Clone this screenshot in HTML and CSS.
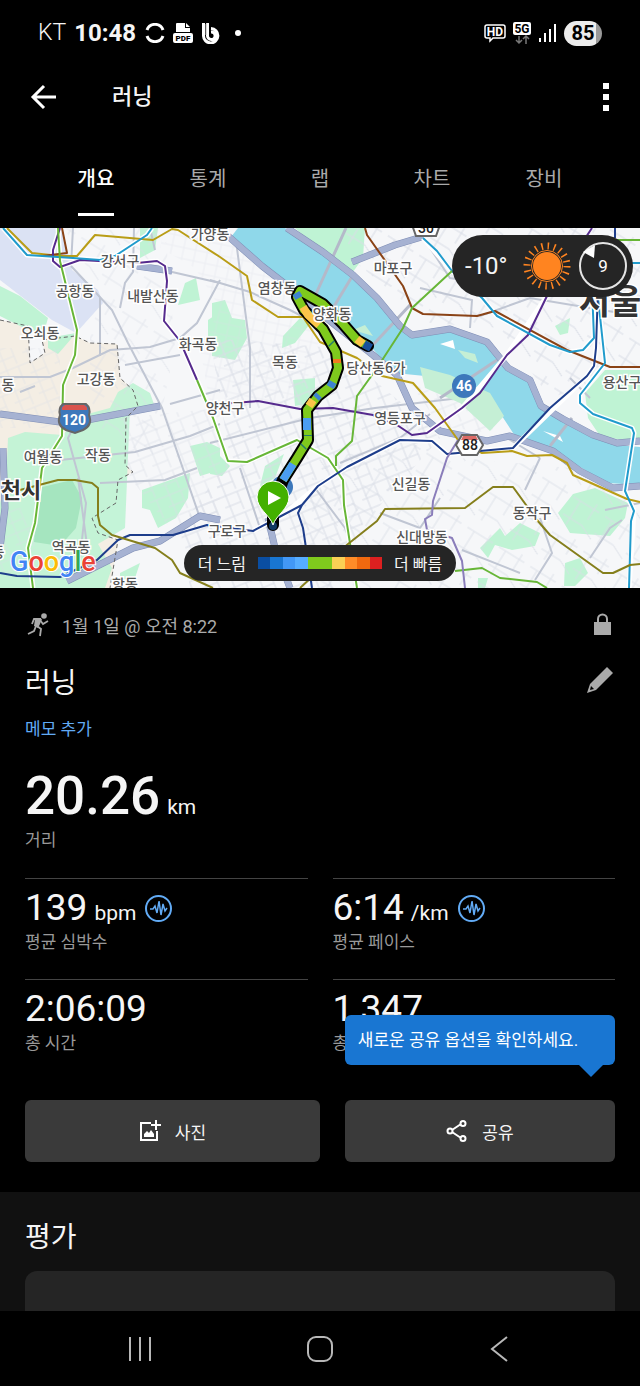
FILE: index.html
```html
<!DOCTYPE html>
<html lang="ko">
<head>
    <meta charset="UTF-8">
    <meta name="viewport" content="width=device-width, initial-scale=1.0">
    <title>러닝</title>
    <link rel="stylesheet" href="styles.css">
</head>
<body>
<div class="app">
    <div class="status">
        <span class="carrier">KT</span>
        <span class="clock">10:48</span>
        <svg class="st_sync" width="20" height="20" viewBox="0 0 20 20"><path d="M2 7A8.5 8.5 0 0 1 18 7M2 13A8.5 8.5 0 0 0 18 13" fill="none" stroke="#fff" stroke-width="3"/></svg>
        <svg class="st_pdf" width="20" height="20" viewBox="0 0 20 20">
            <path d="M4 0H12V5H17V9H3V1Q3 0 4 0ZM13 0L17 4H13Z" fill="#fff"/>
            <rect y="10" width="20" height="10" rx="2" fill="#fff"/>
            <text x="10" y="18" class="t_pdf">PDF</text>
        </svg>
        <svg class="st_b" width="18" height="21" viewBox="0 0 18 21"><path d="M1.5 0V12.5A7.2 7.2 0 1 0 9 5.500M5.500 0V12.500A3.800 3.800 0 1 0 9 9" fill="none" stroke="#fff" stroke-width="3"/><path d="M2 1V12H6V1Z" fill="#fff"/><path d="M3.700 0V12" stroke="#000" stroke-width="0.800"/></svg>
        <i class="st_dot"></i>
        <div class="status_right">
            <svg width="22" height="20" viewBox="0 0 22 20"><path d="M3 2H19Q21 2 21 4V13Q21 15 19 15H9L6 18V15H3Q1 15 1 13V4Q1 2 3 2Z" fill="none" stroke="#fff" stroke-width="1.500"/><text x="11" y="13" class="t_hd">HD</text></svg>
            <svg width="20" height="24" viewBox="0 0 20 24"><rect x="1" y="1" width="18" height="13" rx="2" fill="#fff"/><text x="10" y="12" class="t_5g">5G</text><path d="M7 15V22M4 19L7 22L10 19M14 23V16M11 18L14 15L17 18" fill="none" stroke="#777" stroke-width="1.500"/></svg>
            <svg width="18" height="20" viewBox="0 0 18 20"><path d="M2 15V19M7 10V19M12 6V19M17 1V19" stroke="#fff" stroke-width="2"/></svg>
            <span class="battery">85</span>
        </div>
    </div>

    <header class="appbar">
        <button class="icon_btn" aria-label="뒤로"><svg width="27" height="26" viewBox="0 0 27 26"><path d="M26 13H3M14 2L3 13L14 24" fill="none" stroke="#fff" stroke-width="3"/></svg></button>
        <h1>러닝</h1>
        <button class="icon_btn" aria-label="더보기"><svg width="6" height="30" viewBox="0 0 6 30"><path d="M0 1H6V7H0ZM0 12H6V18H0ZM0 23H6V29H0Z" fill="#fff"/></svg></button>
    </header>

    <nav class="tabs">
        <a href="#" class="on">개요</a>
        <a href="#">통계</a>
        <a href="#">랩</a>
        <a href="#">차트</a>
        <a href="#">장비</a>
    </nav>

    <div class="map">
        <svg class="map_svg" viewBox="0 0 640 360">
            <defs>
                <pattern id="st1" width="26" height="22" patternUnits="userSpaceOnUse" patternTransform="rotate(-22)"><path d="M0 3H26M0 14H17M5 0V22M17 3V22" class="street"/></pattern>
                <pattern id="st2" width="37" height="41" patternUnits="userSpaceOnUse" patternTransform="rotate(32)"><path d="M0 6H30M8 6V34M24 0V18M0 26H22M22 26L37 33" class="street"/></pattern>
                <pattern id="st3" width="12" height="11" patternUnits="userSpaceOnUse" patternTransform="rotate(12)"><path d="M0 3H12M4 0V11" class="street"/></pattern>
            </defs>
            <rect width="640" height="360" fill="#f6f7f9"/>

            <!-- city edge, airport, parks -->
            <path d="M0 92L28 98L30 135L45 125L42 112L75 108L90 115L117 116L120 150L133 162L138 178L126 190L125 237L133 244L118 252L116 275L92 290L98 305L118 312L110 360H0Z" fill="#f4eee4"/>
            <path d="M0 0H62L72 42L98 62L103 75L76 105L52 92L0 52Z" fill="#dbe2f4"/>
            <g fill="#bff3d4">
                <path d="M0 58L20 68L48 90L43 108L20 98L0 88ZM48 110L76 105L65 118L58 126L48 120Z"/>
                <path d="M140 0H158L155 22L140 30ZM185 55L196 50L200 72L178 77ZM208 92L220 84V130L208 116Z"/>
                <path d="M118 164L133 155L150 165L155 179L130 180L125 300L98 316L112 340L105 360H0V275L6 255L8 210L25 204L62 207L84 187L110 180Z" opacity=".9"/>
                <path d="M38 260L72 252L82 270L76 300L60 318L34 314Z" fill="#a5e5bf"/>
                <path d="M190 218L207 214L220 220V242L200 248L194 230ZM142 262L190 245L188 270L176 290L158 300L150 282L142 280ZM120 345L140 335L135 350L120 352Z"/>
                <path d="M212 75L225 72L232 90L245 92L247 110L235 132L212 128ZM283 108L300 90L310 96L295 115L282 120ZM293 152L315 150L315 175L295 178Z"/>
                <path d="M295 0H365L363 30L350 48L322 25ZM212 220L230 238L222 248L210 246ZM265 238L284 226L275 250L260 258Z"/>
                <path d="M555 98L570 90L568 105L560 107ZM585 165L605 142L640 142V215L600 208L588 190Z"/>
                <path d="M558 285L573 266L595 260L628 275L625 290L610 308L570 305ZM480 320L500 300L505 308L520 295L540 305L535 318L512 322L495 317L488 330ZM565 335L580 330L588 345L575 358H564ZM478 350L488 350L485 360H478Z"/>
            </g>

            <!-- small streets -->
            <path d="M165 0H262L300 70L320 110L300 175L210 175L200 120L220 80L195 40L160 20Z" fill="url(#st3)" opacity=".35"/>
            <path d="M210 110L335 120L420 190L440 210L360 300L340 360H190L180 300L230 230Z" fill="url(#st1)"/>
            <path d="M345 0H640V140L550 170L500 100L430 95L350 30Z" fill="url(#st2)"/>
            <path d="M64 0H165L175 120L150 240L90 200L90 100L105 70Z" fill="url(#st2)" opacity=".6"/>
            <path d="M320 230L430 215L460 230L570 240L640 280V360H300V280Z" fill="url(#st2)" opacity=".8"/>
            <path d="M120 190L220 180V300L170 300L130 250ZM410 155L500 190L490 205L440 198Z" fill="url(#st1)" opacity=".6"/>
            <path d="M0 120H60V200H0ZM0 280H35V345H0Z" fill="url(#st1)" opacity=".5"/>

            <!-- larger roads -->
            <g class="road">
                <path d="M71 38L85 53L112 82L128 115L162 180L200 290M71 38L73 0M100 128V70M0 149H50L73 140L110 122L150 119L180 110L197 95L220 52M120 32L220 55"/>
                <path d="M60 232L135 224L190 208L220 196M100 255L165 252L197 240M83 180L68 210L86 275L80 330M78 250L90 340M35 158L20 164"/>
                <path d="M155 22L150 0M120 80L125 55L133 44L134 0M170 176L220 162M125 137L180 127"/>
                <path d="M210 52L250 64L290 82L315 95M235 5L250 120V180M210 215L310 190L375 180L460 170M340 235L400 210L430 186M315 260L345 300L360 340M240 240L260 300"/>
                <path d="M420 60L472 72L470 100M430 20L450 50L512 60L560 30M440 140L480 120L470 150M480 88L530 70L620 85M570 150L590 170M540 230L525 262M507 210L540 230M540 290L552 325L535 352M462 322L520 345"/>
                <path d="M590 330L610 300L622 292M605 282L640 275M380 285L420 300L440 270"/>
            </g>

            <!-- river -->
            <path d="M231 9L238 0H285L323 24L353 47L377 70L397 97L412 107L450 100L487 114L508 140L530 152L541 178L563 193L593 208L617 217L640 219V257L607 255L570 233L547 218L515 208L500 185L470 172L425 148L395 145L370 118L340 95L305 75L290 62L262 38Z" fill="#8fd8ea"/>
            <path d="M420 139L450 147L490 165L504 188L490 203L460 175L425 160ZM458 122L475 126L478 135L465 130ZM365 97L373 108L353 102Z" fill="#c5efd5"/>
            <path d="M440 116L453 112L455 121ZM543 203L560 208L563 214Z" fill="#fff"/>
            <path d="M346 0L315 68M353 47L333 80M410 77L372 118M497 132L440 170M572 190L550 218" fill="none" stroke="#b4b9c9" stroke-width="3"/>
            <g class="hwy_edge">
                <path d="M228 8L262 38L293 62L335 97L373 127L397 147L412 180L440 203L487 213L510 208L553 223L580 243L613 260L640 258"/>
                <path d="M287 0L323 24L353 47L377 70L400 98L412 107L450 101L487 114L508 140L530 152L541 178L563 191L593 207L617 215L640 213M352 34L395 17L425 8"/>
                <path d="M0 186L60 194L87 192L160 178M67 353L133 320L160 313L200 288L220 292M137 38L172 43M268 290L275 320L290 360M3 220L5 280L0 320"/>
            </g>
            <g class="hwy">
                <path d="M228 8L262 38L293 62L335 97L373 127L397 147L412 180L440 203L487 213L510 208L553 223L580 243L613 260L640 258"/>
                <path d="M287 0L323 24L353 47L377 70L400 98L412 107L450 101L487 114L508 140L530 152L541 178L563 191L593 207L617 215L640 213M352 34L395 17L425 8"/>
                <path d="M0 186L60 194L87 192L160 178M67 353L133 320L160 313L200 288L220 292M137 38L172 43M268 290L275 320L290 360M3 220L5 280L0 320"/>
            </g>
            <path d="M0 92L28 98L30 135L45 125L42 112L75 108L90 115L117 116L120 150L133 162L138 178L126 190L125 237L133 244L118 252L116 275L92 290L98 305L118 312L110 360" fill="none" stroke="#666" stroke-dasharray="4 3"/>

            <!-- subway lines -->
            <g class="subway_bg">
                <path d="M3 0L27 27L73 30L100 32L115 28L147 7L152 0M58 0L60 33L77 102L75 127L63 157L62 208L42 240L35 295L28 320L33 360"/>
                <path d="M60 0L53 22V33L60 39L80 32L137 35L157 33L165 38L167 53L164 93L180 113L208 177L213 190L228 233L247 234L297 212L328 230L343 252L344 277L357 360"/>
                <path d="M423 10L452 43L482 70L497 88L550 117L570 124L583 122L594 110L592 60M597 60L605 135L580 167V175L593 186L632 200L634 205L625 263L634 283L629 360"/>
                <path d="M598 60L596 120L594 138L587 148L513 220L447 226L432 213L400 212L347 239L318 258L283 287L253 303M427 205L462 180L507 127L547 68"/>
            </g>
            <g class="subway">
                <path stroke="#b99d16" d="M7 0L32 25L60 28H77L95 7L153 12L172 1L178 2L220 29L247 48L252 72L278 89H303L320 114L357 130L382 148L413 155L435 180L458 212L482 225L512 223L527 228L552 227L567 235L573 247L627 271L640 274"/>
                <path stroke="#8a4316" d="M62 0L67 25L42 28M365 0L367 7L403 58L412 80L423 86L477 88L495 83L567 122L610 139H640"/>
                <path stroke="#552a8d" d="M60 0L53 22V33L60 39L80 32L137 35L157 33L165 38L167 53L164 93L180 113L197 152M220 176L258 173L300 181L333 180L373 187L397 197L412 207L427 205L462 180L480 165L507 127L528 107L547 68L592 0"/>
                <path stroke="#209bcc" d="M3 0L27 27L73 30L100 32L115 28L147 7L152 0M423 10L437 23L452 43L482 70L497 88L550 117L570 124L583 122L594 110L592 60M597 60L605 135L580 167V175L593 186L632 200L634 205L625 263L634 283L631 293L629 360M600 35H640"/>
                <path stroke="#67b637" d="M58 0L60 33L77 102L75 127L63 157L62 208L42 240L35 295L28 320L33 360M197 152L213 190L228 233L247 234L297 212L328 230L343 252L344 277L357 360M336 238V228L352 213L357 168L377 140L403 100L412 80L452 43M455 343L482 340L500 350L537 354L547 360M600 12H640"/>
                <path stroke="#1d3d8b" d="M598 60L596 120L594 138L587 148L550 180L513 220L447 226L432 213L400 212L347 239L318 258L302 277L283 287L253 303L207 297L173 307H130L118 312L97 332L60 349L17 348L0 345M302 277L298 285L303 300L312 360M615 0V10"/>
                <path stroke="#857f1c" d="M20 262L58 252H75L92 255L98 260V288L100 297L112 307L155 320L172 332L180 345L213 360M300 360L348 316L377 293L385 281L465 280L493 259H513L537 292L550 307L603 345H613L630 337L640 336"/>
                <path stroke="#8a7dba" d="M458 212L447 230L433 273L432 287L425 291L427 302L452 310L462 333L465 360"/>
            </g>

            <g class="place">
                <text x="210" y="11">가양동</text><text x="120" y="38">강서구</text><text x="75" y="68">공항동</text>
                <text x="153" y="73">내발산동</text><text x="277" y="65">염창동</text><text x="393" y="45">마포구</text>
                <text x="40" y="110">오쇠동</text><text x="198" y="121">화곡동</text><text x="285" y="139">목동</text>
                <text x="376" y="145">당산동6가</text><text x="96" y="156">고강동</text><text x="8" y="162">동</text>
                <text x="225" y="185">양천구</text><text x="400" y="195">영등포구</text><text x="43" y="234">여월동</text>
                <text x="98" y="232">작동</text><text x="411" y="261">신길동</text><text x="532" y="290">동작구</text>
                <text x="227" y="308">구로구</text><text x="422" y="314">신대방동</text><text x="71" y="324">역곡동</text>
                <text x="125" y="361">항동</text><text x="622" y="159">용산구</text><text x="-2" y="329">동</text>
                <text x="21" y="270" class="city">천시</text>
                <text x="610" y="86" class="capital">서울</text>
            </g>

            <!-- road shields -->
            <path d="M60 187Q58 180 63 176H86Q91 180 89 187Q93 197 83 202L75 205L66 202Q56 197 60 187Z" fill="#3d78bb" stroke="#666" stroke-width="2"/>
            <path d="M62 182Q61 179 65 177H84Q88 179 87 182Z" fill="#d9534d"/>
            <text x="74" y="197" class="shield white">120</text>
            <circle cx="464" cy="158" r="12" fill="#3d78bb"/><text x="464" y="163" class="shield white">46</text>
            <path d="M462 207H477L483 217L477 227H462L456 217Z" fill="#fff" stroke="#666" stroke-width="2"/>
            <path d="M463 208H476L478 212H461Z" fill="#dc6a66"/><text x="470" y="222" class="shield">88</text>
            <path d="M411 -6H441L436 8H416Z" fill="#fff" stroke="#666" stroke-width="2"/><text x="426" y="5" class="shield">30</text>

            <!-- run track, coloured by pace -->
            <circle cx="282" cy="259" r="11" fill="#3d78bb"/>
            <path class="track_out" d="M368 118L357 112L343 96L323 76L300 63L297 69L304 82L323 101L336 124L338 140L332 157L318 168L307 182L308 212L297 230L283 252L273 278V297"/>
            <path class="track" d="M368 118L357 112L343 96L323 76L300 63L297 69L304 82L323 101L336 124L338 140L332 157L318 168L307 182L308 212L297 230L283 252"/>
            <g fill="none" stroke-width="8">
                <path stroke="#174f9b" d="M371 120L364 116"/><path stroke="#fbc54a" d="M363 116L357 111M303 79L308 87L319 97M313 172L309 178"/>
                <path stroke="#3e83d0" d="M296 65L299 70M333 154L330 159M319 167L316 170"/><path stroke="#f27a20" d="M337 131V135"/>
                <path stroke="#4b9df2" d="M307 190V202M293 236L283 252"/>
                <path stroke="#257c6b" d="M331 115L332 116M308 207V208M304 218L303 219"/>
            </g>
            <text x="332" y="91" class="place_one">양화동</text>
            <circle cx="273" cy="298" r="4" fill="#123a63"/>
            <path d="M273 297C270 287 257 281 257 269A16 16 0 0 1 289 269C289 281 276 287 273 297Z" fill="#43b000" stroke="#fff"/>
            <path d="M268 263V277L281 270Z" fill="#fff"/>

            <text x="10" y="343" class="google"><tspan fill="#4285f4">G</tspan><tspan fill="#ea4335">o</tspan><tspan fill="#fbbc05">o</tspan><tspan fill="#4285f4">g</tspan><tspan fill="#34a853">l</tspan><tspan fill="#ea4335">e</tspan></text>
        </svg>

        <div class="weather">
            <span>-10°</span>
            <svg width="48" height="48" viewBox="0 0 48 48">
                <circle cx="24" cy="24" r="14" fill="#ff8420"/>
                <circle cx="24" cy="24" r="15.500" fill="none" stroke="#ff8420" stroke-width="1"/>
                <circle cx="24" cy="24" r="20" fill="none" stroke="#ff8420" stroke-width="7" stroke-dasharray="1.500 4.783"/>
            </svg>
            <svg width="48" height="48" viewBox="0 0 48 48">
                <circle cx="24" cy="24" r="23" fill="none" stroke="#e5e5e5" stroke-width="2"/>
                <path d="M4 10L16 3L15 16Z" fill="#fff"/>
                <text x="24" y="30" class="t_wind">9</text>
            </svg>
        </div>
        <div class="legend">
            <span>더 느림</span>
            <div class="scale"><i class="c1"></i><i class="c2"></i><i class="c3"></i><i class="c4"></i><i class="c5"></i><i class="c5"></i><i class="c6"></i><i class="c7"></i><i class="c8"></i><i class="c9"></i></div>
            <span>더 빠름</span>
        </div>
    </div>

    <main class="content">
        <section class="summary">
            <div class="row date">
                <svg width="22" height="24" viewBox="0 0 22 24"><circle cx="17" cy="3" r="2.800" fill="#aaa"/><path d="M5 11L7 6L13 6L10 13L14 16L13 23M9 13L7 18L1 21M13 7L16 11L21 8" fill="none" stroke="#aaa" stroke-width="1.800"/><path d="M8 6L15 6L13 11L11 15L7 13Z" fill="#aaa"/></svg>
                <span>1월 1일 @ 오전 8:22</span>
                <svg class="end" width="25" height="24" viewBox="0 0 25 24"><path d="M4 9H21V22H4Z" fill="#aaa"/><path d="M8 10V6A4.500 4.500 0 0 1 17 6V10" fill="none" stroke="#aaa" stroke-width="2"/></svg>
            </div>
            <div class="row name">
                <h2>러닝</h2>
                <button class="icon_btn end" aria-label="편집"><svg width="28" height="28" viewBox="0 0 28 28"><path d="M20 1L26 7L9 24L0 27L3 18Z" fill="#aaa"/><path d="M4 20L3 24L7 23Z" fill="#000"/></svg></button>
            </div>
            <a href="#" class="memo">메모 추가</a>

            <div class="metric big">
                <p class="value">20.26 <small>km</small></p>
                <p class="label">거리</p>
            </div>
            <div class="metrics">
                <div class="metric">
                    <p class="value">139 <small>bpm</small><svg class="pulse" width="27" height="27" viewBox="0 0 27 27"><circle cx="13.500" cy="13.500" r="12.500"/><path d="M5 14H8L10 11L12 18L14 6L16 20L18 9L20 16L22 13"/></svg></p>
                    <p class="label">평균 심박수</p>
                </div>
                <div class="metric">
                    <p class="value">6:14 <small>/km</small><svg class="pulse" width="27" height="27" viewBox="0 0 27 27"><circle cx="13.500" cy="13.500" r="12.500"/><path d="M5 14H8L10 11L12 18L14 6L16 20L18 9L20 16L22 13"/></svg></p>
                    <p class="label">평균 페이스</p>
                </div>
                <div class="metric">
                    <p class="value">2:06:09</p>
                    <p class="label">총 시간</p>
                </div>
                <div class="metric">
                    <p class="value">1,347</p>
                    <p class="label">총</p>
                </div>
            </div>

            <div class="actions">
                <button class="btn photo">
                    <svg width="22" height="22" viewBox="0 0 22 22"><path d="M12 3H2V20H18V11M17 0V10M12 5H22" fill="none" stroke="#fff" stroke-width="2"/><path d="M5 17V14L8 11L10 13L12 10L15 14V17Z" fill="#fff"/></svg>
                    사진
                </button>
                <div class="share">
                    <button class="btn">
                        <svg width="22" height="22" viewBox="0 0 22 22"><path d="M6 10L15 4M6 12L15 18" stroke="#fff" stroke-width="2"/><g fill="none" stroke="#fff" stroke-width="2"><circle cx="4" cy="11" r="2.500"/><circle cx="17" cy="3.500" r="2.500"/><circle cx="17" cy="18.500" r="2.500"/></g></svg>
                        공유
                    </button>
                    <div class="tip">새로운 공유 옵션을 확인하세요.</div>
                </div>
            </div>
        </section>

        <section class="rating">
            <h2>평가</h2>
            <div class="card"></div>
        </section>
    </main>

    <nav class="sysnav">
        <button class="icon_btn" aria-label="최근 앱"><svg width="26" height="26" viewBox="0 0 26 26"><path d="M3 1V25M13 1V25M23 1V25"/></svg></button>
        <button class="icon_btn" aria-label="홈"><svg width="26" height="26" viewBox="0 0 26 26"><rect x="1" y="1" width="24" height="24" rx="8"/></svg></button>
        <button class="icon_btn" aria-label="이전"><svg width="26" height="26" viewBox="0 0 26 26"><path d="M20 1L5 13L20 25"/></svg></button>
    </nav>
</div>
</body>
</html>
```

FILE: styles.css
```css
*{box-sizing:border-box;}
body{
    margin:0;
    background:#000;
    color:#f5f5f5;
    font-family:Roboto,"Noto Sans CJK KR",sans-serif;
    font-size:17px;
}
h1,h2,p{margin:0;font-weight:400;}
a{text-decoration:none;}
svg{display:block;flex:none;}
button{
    font:inherit;
    color:inherit;
    border:0;
    background:none;
    padding:0;
}
.app{
    display:flex;
    flex-direction:column;
    height:100vh;
    overflow:hidden;
}

/* 상태 표시줄 */
.status{
    display:flex;
    align-items:center;
    height:66px;
    padding:0 38px;
    flex:none;
    line-height:28px;
}
.carrier{font-size:23px;font-weight:300;margin-right:8px;}
.clock{font-size:24px;font-weight:700;margin-right:9px;}
.st_pdf{margin:0 9px 0 8px;}
.st_dot{
    width:6px;
    height:6px;
    border-radius:50%;
    background:#fff;
    margin-left:15px;
}
.status_right{
    display:flex;
    align-items:center;
    gap:6px;
    margin-left:auto;
}
.battery{
    width:38px;
    line-height:25px;
    border-radius:13px;
    background:linear-gradient(90deg,#ececec 84%,#999 84%);
    color:#000;
    font-size:20px;
    font-weight:700;
    text-align:center;
    margin-left:2px;
}
.t_pdf{font-size:8px;font-weight:900;text-anchor:middle;}
.t_hd{font-size:12px;font-weight:700;text-anchor:middle;fill:#fff;}
.t_5g{font-size:12px;font-weight:700;text-anchor:middle;}

/* 상단 */
.appbar{
    display:flex;
    align-items:center;
    height:62px;
    padding:0 31px 0 30px;
    flex:none;
}
.appbar h1{flex:1;font-size:22px;line-height:30px;font-weight:500;margin-left:55px;}
.tabs{
    display:grid;
    grid-template-columns:repeat(5,1fr);
    justify-items:center;
    padding:0 40px;
    height:100px;
    flex:none;
}
.tabs a{
    height:88px;
    line-height:102px;
    font-size:20px;
    color:#aaa;
}
.tabs .on{color:#fff;font-weight:500;border-bottom:3px solid #fff;}

/* 지도 */
.map{position:relative;flex:none;}
.map_svg{width:100%;height:auto;}
.street{fill:none;stroke:#d9dde6;stroke-width:1;}
.road{fill:none;stroke:#c0c6d3;stroke-width:2;}
.hwy,.hwy_edge{fill:none;stroke:#a6b2d2;stroke-width:6;stroke-linejoin:round;}
.hwy_edge{stroke:#7f8eb5;stroke-width:7;}
.subway,.subway_bg{fill:none;stroke-width:2;stroke-linejoin:round;}
.subway_bg{stroke:#fff;stroke-width:5;}
.place text,.place_one{
    font-family:"Noto Sans CJK KR",sans-serif;
    font-size:14px;
    font-weight:500;
    fill:#555;
    stroke:#fff;
    stroke-width:3px;
    paint-order:stroke;
    text-anchor:middle;
}
.place .city{font-size:22px;font-weight:700;fill:#333;}
.place .capital{font-size:34px;font-weight:700;fill:#333;}
.shield{font-size:14px;font-weight:500;text-anchor:middle;fill:#222;}
.white{fill:#fff;font-weight:700;}
.track,.track_out{fill:none;stroke:#7fca1d;stroke-width:8;stroke-linejoin:round;}
.track_out{stroke:#000;stroke-width:12;stroke-linecap:round;}
.google{font-size:27px;font-weight:500;stroke:#fff;stroke-width:2px;paint-order:stroke;}
.weather,.legend{
    position:absolute;
    display:flex;
    align-items:center;
    justify-content:center;
    background:#252525;
    border-radius:31px;
}
.weather{
    top:7px;
    right:7px;
    height:62px;
    padding:0 6px 0 13px;
    gap:8px;
    font-size:24px;
}
.weather span{width:50px;}
.t_wind{font-size:17px;fill:#fff;text-anchor:middle;}
.legend{
    bottom:7px;
    left:50%;
    transform:translateX(-50%);
    height:36px;
    width:272px;
    gap:12px;
    font-size:16px;
    white-space:nowrap;
}
.scale{display:flex;width:124px;height:12px;}
.scale i{flex:1;}
.c1{background:#0a4ea2;}
.c2{background:#1976d2;}
.c3{background:#4298f6;}
.c4{background:#56adff;}
.c5{background:#7fca1d;}
.c6{background:#fad055;}
.c7{background:#ff8c28;}
.c8{background:#f0690f;}
.c9{background:#dc2020;}

/* 요약 */
.content{flex:1;min-height:0;overflow:hidden;}
.summary{padding:22px 25px 30px;}
.row{display:flex;align-items:center;}
.end{margin-left:auto;}
.date{height:30px;font-size:18px;color:#aaa;padding-left:2px;}
.date span{margin-left:13px;}
.name{height:66px;margin-top:11px;}
.name .end{margin-bottom:8px;}
h2{font-size:28px;line-height:40px;}
.memo{display:block;line-height:24px;color:#62abf5;}
.value{
    display:flex;
    align-items:baseline;
    gap:7px;
    height:44px;
    font-size:37px;
    line-height:44px;
}
.value small{font-size:21px;line-height:24px;}
.label{line-height:24px;color:#999;}
.big{padding-top:23px;height:137px;}
.big .value{height:64px;font-size:53px;font-weight:500;line-height:64px;}
.big small{font-weight:400;}
.metrics{
    display:grid;
    grid-template-columns:1fr 1fr;
    column-gap:25px;
}
.metrics .metric{border-top:1px solid #444;height:101px;padding-top:7px;}
.pulse{align-self:center;fill:none;stroke:#62abf5;stroke-width:2;margin-left:2px;}
.pulse path{stroke-width:1.5;}
.actions{display:flex;gap:25px;margin-top:20px;}
.photo{flex:12;}
.share{flex:11;position:relative;}
.btn{
    display:flex;
    align-items:center;
    justify-content:center;
    gap:14px;
    height:62px;
    border-radius:6px;
    background:#3a3a3a;
}
.share .btn{width:100%;}
.tip{
    position:absolute;
    left:0;
    right:0;
    bottom:97px;
    padding:0 13px;
    line-height:50px;
    border-radius:6px;
    background:#1976d2;
    color:#fff;
    white-space:nowrap;
}
.tip:after{
    content:"";
    position:absolute;
    top:100%;
    right:12px;
    border:12px solid transparent;
    border-top-color:#1976d2;
    border-bottom:0;
}

.rating{background:#111;padding:26px 25px 0;}
.card{
    height:200px;
    margin-top:13px;
    border-radius:12px;
    background:#252525;
}

.sysnav{
    display:flex;
    justify-content:space-around;
    align-items:center;
    height:75px;
    padding:0 50px;
    flex:none;
}
.sysnav svg{fill:none;stroke:#b8b8b8;stroke-width:2;}
```
